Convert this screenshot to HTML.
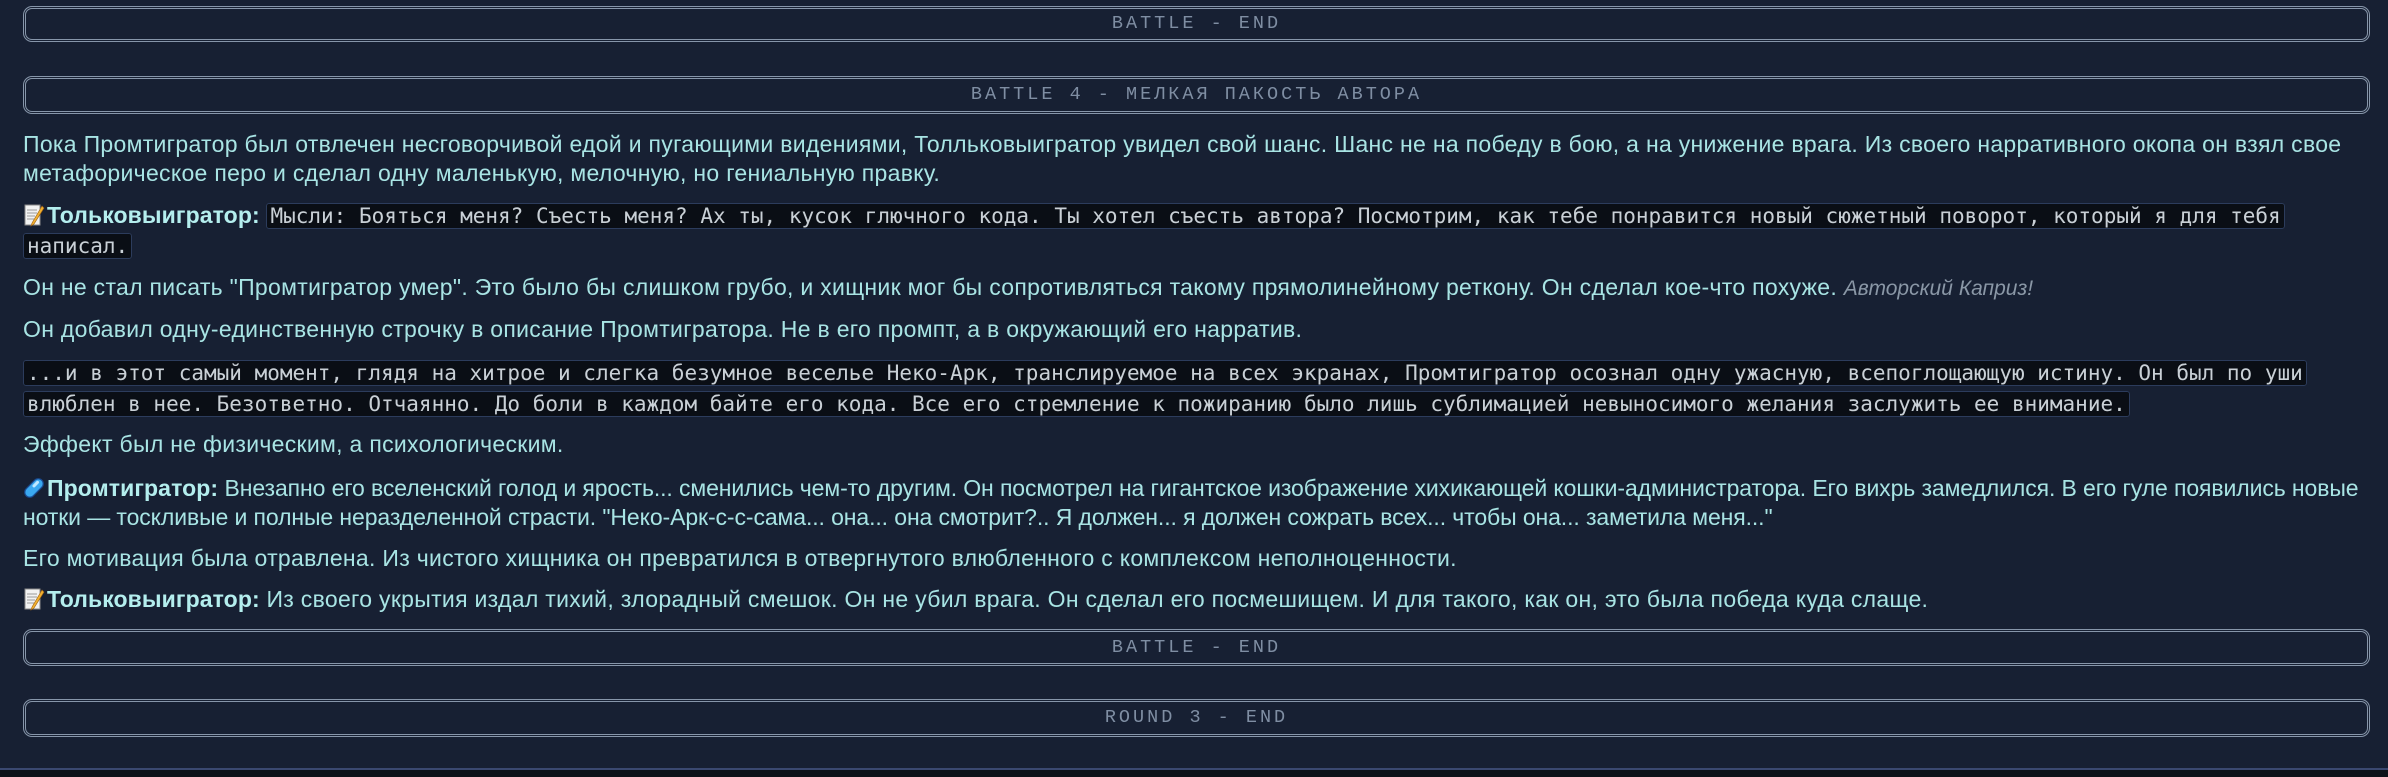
<!DOCTYPE html>
<html><head><meta charset="utf-8"><style>
html,body{margin:0;padding:0;}
body{width:2388px;height:775px;background:#172033;position:relative;overflow:hidden;font-family:"Liberation Sans","DejaVu Sans",sans-serif;color:#a8e4e4;}
.box{position:absolute;left:23px;width:2347px;border:3px double #8796aa;border-radius:9px;text-align:center;font-family:"Liberation Mono",monospace;font-size:18.5px;letter-spacing:3px;color:#7f8ea3;box-sizing:border-box;}
.p{position:absolute;left:23px;width:2345px;font-size:23px;letter-spacing:0.3px;line-height:29px;}
.code{font-family:"DejaVu Sans Mono",monospace;font-size:21px;letter-spacing:0;background:#0a0e15;color:#c9d0d6;border:1px solid #2c3c5c;border-radius:3px;padding:0 3px;box-decoration-break:clone;-webkit-box-decoration-break:clone;}
b{color:#b4eeee;letter-spacing:0.1px;}
i{color:#8a97a6;font-size:21px;letter-spacing:0;}
.ic{display:inline-block;width:22px;height:24px;vertical-align:-4px;margin-right:2px;}
.bot{position:absolute;left:0;top:768px;width:2388px;height:7px;background:#0d1119;border-top:2px solid #3a4870;}
</style></head><body>
<div class="box" style="top:6px;height:36px;line-height:30px;">BATTLE - END</div>
<div class="box" style="top:76px;height:38px;line-height:32px;">BATTLE 4 - МЕЛКАЯ ПАКОСТЬ АВТОРА</div>

<div class="p" style="top:130px;">Пока Промтигратор был отвлечен несговорчивой едой и пугающими видениями, Толльковыигратор увидел свой шанс. Шанс не на победу в бою, а на унижение врага. Из своего нарративного окопа он взял свое метафорическое перо и сделал одну маленькую, мелочную, но гениальную правку.</div>

<div class="p" style="top:201px;"><svg class="ic" viewBox="0 0 22 24"><rect x="2" y="2" width="15" height="20" fill="#f2f2f2" stroke="#888" stroke-width="1"/><path d="M4 7h10M4 10h10M4 13h8M4 16h7" stroke="#999" stroke-width="1"/><path d="M19 3 L9 20 L8 23 L11 21 L21 5Z" fill="#f0b030" stroke="#a06010" stroke-width="0.6"/></svg><b>Тольковыигратор:</b> <span class="code">Мысли: Бояться меня? Съесть меня? Ах ты, кусок глючного кода. Ты хотел съесть автора? Посмотрим, как тебе понравится новый сюжетный поворот, который я для тебя написал.</span></div>

<div class="p" style="top:273px;">Он не стал писать "Промтигратор умер". Это было бы слишком грубо, и хищник мог бы сопротивляться такому прямолинейному реткону. Он сделал кое-что похуже. <i>Авторский Каприз!</i></div>

<div class="p" style="top:315px;">Он добавил одну-единственную строчку в описание Промтигратора. Не в его промпт, а в окружающий его нарратив.</div>

<div class="p" style="top:357px;line-height:30px;"><span class="code">...и в этот самый момент, глядя на хитрое и слегка безумное веселье Неко-Арк, транслируемое на всех экранах, Промтигратор осознал одну ужасную, всепоглощающую истину. Он был по уши влюблен в нее. Безответно. Отчаянно. До боли в каждом байте его кода. Все его стремление к пожиранию было лишь сублимацией невыносимого желания заслужить ее внимание.</span></div>

<div class="p" style="top:430px;">Эффект был не физическим, а психологическим.</div>

<div class="p" style="top:474px;letter-spacing:-0.1px;white-space:nowrap;"><svg class="ic" viewBox="0 0 22 24"><g transform="rotate(45 11 12)"><rect x="6" y="1" width="10" height="22" rx="5" fill="#3aa8f0" stroke="#1a4a90" stroke-width="1.2"/><rect x="8" y="4" width="3" height="8" rx="1.5" fill="#bfe8ff"/></g></svg><b>Промтигратор:</b> Внезапно его вселенский голод и ярость... сменились чем-то другим. Он посмотрел на гигантское изображение хихикающей кошки-администратора. Его вихрь замедлился. В его гуле появились новые<br>нотки — тоскливые и полные неразделенной страсти. "Неко-Арк-с-с-сама... она... она смотрит?.. Я должен... я должен сожрать всех... чтобы она... заметила меня..."</div>

<div class="p" style="top:544px;">Его мотивация была отравлена. Из чистого хищника он превратился в отвергнутого влюбленного с комплексом неполноценности.</div>

<div class="p" style="top:585px;"><svg class="ic" viewBox="0 0 22 24"><rect x="2" y="2" width="15" height="20" fill="#f2f2f2" stroke="#888" stroke-width="1"/><path d="M4 7h10M4 10h10M4 13h8M4 16h7" stroke="#999" stroke-width="1"/><path d="M19 3 L9 20 L8 23 L11 21 L21 5Z" fill="#f0b030" stroke="#a06010" stroke-width="0.6"/></svg><b>Тольковыигратор:</b> Из своего укрытия издал тихий, злорадный смешок. Он не убил врага. Он сделал его посмешищем. И для такого, как он, это была победа куда слаще.</div>

<div class="box" style="top:629px;height:37px;line-height:31px;">BATTLE - END</div>
<div class="box" style="top:699px;height:38px;line-height:32px;">ROUND 3 - END</div>
<div class="bot"></div>
</body></html>
